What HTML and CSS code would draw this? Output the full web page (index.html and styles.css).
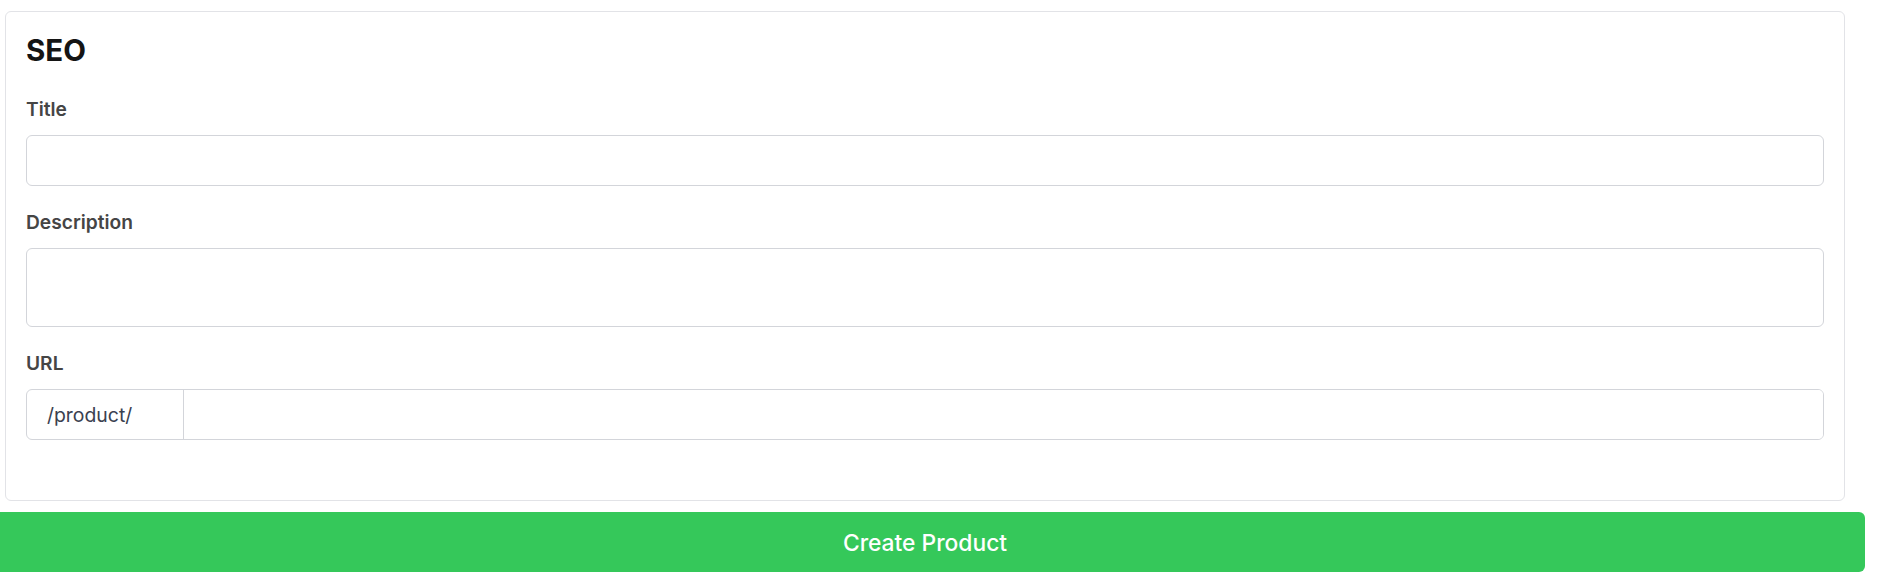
FILE: index.html
```html
<!DOCTYPE html>
<html lang="en">
<head>
<meta charset="utf-8">
<title>SEO</title>
<link rel="stylesheet" href="styles.css">
</head>
<body>
<div class="page">
  <section class="card">
    <h2 class="card-title">SEO</h2>
    <div class="field">
      <label class="label">Title</label>
      <input class="input" type="text">
    </div>
    <div class="field">
      <label class="label">Description</label>
      <textarea class="textarea"></textarea>
    </div>
    <div class="field field-last">
      <label class="label">URL</label>
      <div class="url-group">
        <span class="url-prefix">/product/</span>
        <input class="url-input" type="text">
      </div>
    </div>
  </section>
  <button class="submit" type="button">Create Product</button>
</div>
</body>
</html>
```

FILE: styles.css
```css
html, body {
  margin: 0;
  padding: 0;
  background: #ffffff;
  overflow: hidden;
}

body {
  font-family: Inter, "Noto Sans", "Liberation Sans", sans-serif;
  color: #111111;
}

.page {
  padding-top: 11px;
}

.card {
  box-sizing: border-box;
  margin-left: 5px;
  width: 1840px;
  border: 1px solid #e2e3e7;
  border-radius: 6px;
  padding: 21px 20px 60px 20px;
  background: #fff;
}

.card-title {
  margin: 0 0 29px 0;
  font-size: 29.5px;
  line-height: 35px;
  font-weight: 700;
  color: #141414;
}

.field {
  display: flex;
  flex-direction: column;
  margin-bottom: 24px;
}

.field-last {
  margin-bottom: 0;
}

.label {
  font-size: 19.2px;
  line-height: 24px;
  font-weight: 600;
  color: #454545;
  margin-bottom: 14px;
}

.input,
.textarea {
  box-sizing: border-box;
  width: 100%;
  border: 1px solid #d3d5da;
  border-radius: 6px;
  background: #fff;
  font-family: inherit;
  font-size: 19.2px;
  padding: 0 20px;
  margin: 0;
  outline: none;
}

.input {
  height: 51px;
}

.textarea {
  height: 79px;
  resize: none;
  display: block;
}

.url-group {
  box-sizing: border-box;
  display: flex;
  height: 51px;
  border: 1px solid #d3d5da;
  border-radius: 6px;
  overflow: hidden;
}

.url-prefix {
  box-sizing: border-box;
  flex: 0 0 157px;
  display: flex;
  align-items: center;
  padding-left: 20px;
  border-right: 1px solid #d3d5da;
  font-size: 19.4px;
  color: #3a4150;
}

.url-input {
  flex: 1;
  border: 0;
  outline: none;
  font-family: inherit;
  font-size: 19.2px;
  padding: 0 16px;
  margin: 0;
  background: #fff;
}

.submit {
  display: block;
  box-sizing: border-box;
  margin: 11px 0 0 -15px;
  width: 1880px;
  height: 60px;
  border: 0;
  border-radius: 6px;
  background: #35c85a;
  color: #ffffff;
  font-family: inherit;
  font-size: 22.8px;
  font-weight: 500;
  cursor: pointer;
}
```
